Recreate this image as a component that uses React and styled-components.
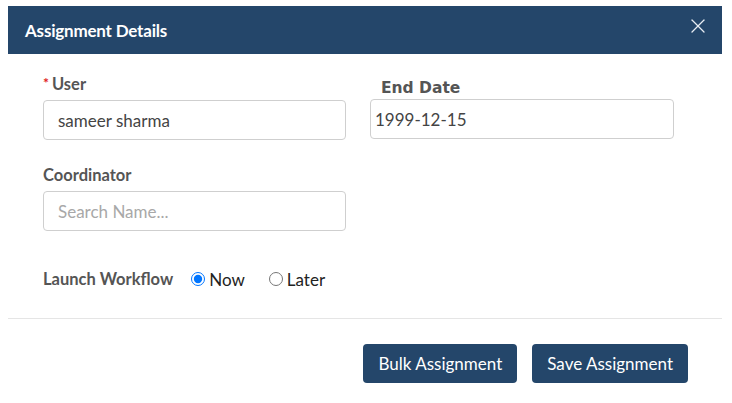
import React, { useState } from 'react';
import styled, { createGlobalStyle } from 'styled-components';
import { X } from 'lucide-react';

const GlobalStyle = createGlobalStyle`
  body {
    margin: 0;
    background: #fff;
    font-family: Lato, "Open Sans", sans-serif;
  }
`;

const Page = styled.div`
  padding: 6px 10px 0 8px;
`;

const Modal = styled.div`
  width: 714px;
  background: #fff;
`;

const Header = styled.div`
  height: 48px;
  background: #24466a;
  display: flex;
  align-items: center;
  justify-content: space-between;
  padding: 0 12px 0 17px;
  box-sizing: border-box;
`;

const Title = styled.h2`
  margin: 0;
  color: #fff;
  font-size: 17px;
  font-weight: 700;
  letter-spacing: -0.2px;
`;

const CloseButton = styled.button`
  background: none;
  border: none;
  padding: 0;
  color: #e8edf3;
  display: flex;
  margin-top: -8px;
  cursor: pointer;
`;

const Body = styled.div`
  padding: 20px 35px 0;
`;

const Grid = styled.div`
  display: grid;
  grid-template-columns: 303px 304px;
  column-gap: 24px;
  row-gap: 25px;
`;

const Field = styled.div`
  display: flex;
  flex-direction: column;
`;

const Label = styled.label`
  font-size: 16.5px;
  font-weight: 700;
  color: #555;
  line-height: 20px;
  height: 20px;
  margin-bottom: 6px;
  display: flex;
  align-items: flex-start;
`;

const DateLabel = styled(Label)`
  font-family: "DejaVu Sans", sans-serif;
  font-size: 15.5px;
  padding-left: 11px;
  margin-top: 4px;
  margin-bottom: 1px;
`;

const Star = styled.span`
  color: #e02020;
  font-size: 14px;
  line-height: 14px;
  margin: 2px 3px 0 0;
`;

const Input = styled.input`
  height: 40px;
  box-sizing: border-box;
  border: 1px solid #cfcfcf;
  border-radius: 4px;
  padding: 0 ${(p) => (p.$flush ? '4px' : '14px')};
  font-family: Lato, sans-serif;
  font-size: 17px;
  color: #444;
  outline: none;

  &::placeholder {
    color: #a8a8a8;
  }
`;

const LaunchRow = styled.div`
  display: flex;
  align-items: center;
  margin-top: 38px;
  height: 20px;
`;

const LaunchLabel = styled.span`
  font-size: 16.5px;
  font-weight: 700;
  color: #555;
  margin-right: 13px;
`;

const RadioOption = styled.label`
  display: flex;
  align-items: center;
  font-size: 17px;
  color: #222;
  margin-right: 19px;
  cursor: pointer;

  input {
    margin: 0 4px 0 5px;
    width: 14px;
    height: 14px;
  }
`;

const Divider = styled.hr`
  border: none;
  border-top: 1px solid #e5e5e5;
  margin: 29px 0 0;
`;

const Footer = styled.div`
  display: flex;
  justify-content: flex-end;
  gap: 15px;
  padding: 25px 34px 0;
`;

const Button = styled.button`
  height: 39px;
  padding: 0 15px;
  background: #24466a;
  color: #fff;
  border: none;
  border-radius: 4px;
  font-family: Lato, sans-serif;
  font-size: 17px;
  cursor: pointer;
`;

const App = () => {
  const [user, setUser] = useState('sameer sharma');
  const [endDate, setEndDate] = useState('1999-12-15');
  const [coordinator, setCoordinator] = useState('');
  const [launch, setLaunch] = useState('now');

  return (
    <Page>
      <GlobalStyle />
      <Modal>
        <Header>
          <Title>Assignment Details</Title>
          <CloseButton aria-label="close">
            <X size={24} strokeWidth={1.3} />
          </CloseButton>
        </Header>
        <Body>
          <Grid>
            <Field>
              <Label><Star>*</Star>User</Label>
              <Input value={user} onChange={(e) => setUser(e.target.value)} />
            </Field>
            <Field>
              <DateLabel>End Date</DateLabel>
              <Input $flush value={endDate} onChange={(e) => setEndDate(e.target.value)} />
            </Field>
            <Field>
              <Label>Coordinator</Label>
              <Input
                placeholder="Search Name..."
                value={coordinator}
                onChange={(e) => setCoordinator(e.target.value)}
              />
            </Field>
          </Grid>
          <LaunchRow>
            <LaunchLabel>Launch Workflow</LaunchLabel>
            <RadioOption>
              <input type="radio" name="launch" checked={launch === 'now'} onChange={() => setLaunch('now')} />
              Now
            </RadioOption>
            <RadioOption>
              <input type="radio" name="launch" checked={launch === 'later'} onChange={() => setLaunch('later')} />
              Later
            </RadioOption>
          </LaunchRow>
        </Body>
        <Divider />
        <Footer>
          <Button>Bulk Assignment</Button>
          <Button>Save Assignment</Button>
        </Footer>
      </Modal>
    </Page>
  );
};

export default App;
